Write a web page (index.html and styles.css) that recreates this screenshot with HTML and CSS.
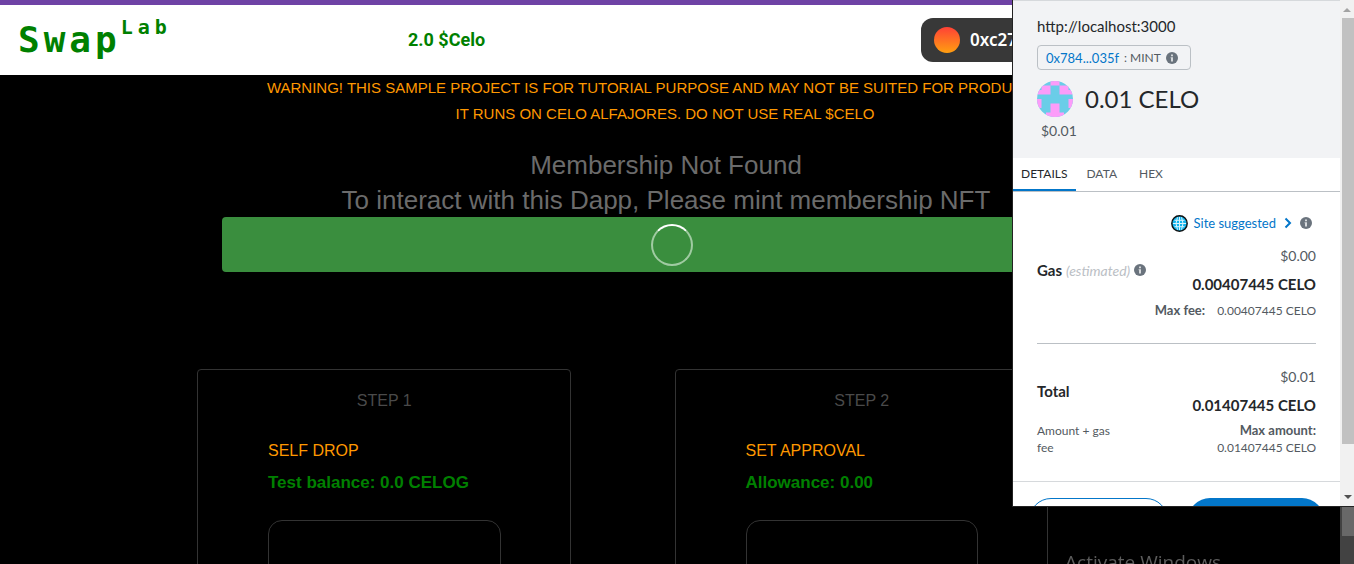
FILE: index.html
```html
<!DOCTYPE html>
<html lang="en">
<head>
<meta charset="utf-8">
<meta name="viewport" content="width=device-width, initial-scale=1">
<title>SwapLab</title>
<link rel="stylesheet" href="styles.css">
</head>
<body>
<svg class="defs" aria-hidden="true">
  <symbol id="info" viewBox="0 0 12 12">
    <circle cx="6" cy="6" r="6" fill="#6a737d"/>
    <path d="M5 2.5h2v1.7H5zM4.6 5.2H7v4.3H5V6.2h-.4z" fill="#d6d9dc"/>
  </symbol>
</svg>
<div class="app">
  <header class="topbar">
    <a class="logo" href="#">Swap<sup class="logo-sup">Lab</sup></a>
    <span class="balance">2.0 $Celo</span>
    <button class="account" type="button"><span class="account-dot"></span>0xc27...a41</button>
  </header>
  <main class="content">
    <section class="warning">
      <p>WARNING! THIS SAMPLE PROJECT IS FOR TUTORIAL PURPOSE AND MAY NOT BE SUITED FOR PRODUCTION.</p>
      <p>IT RUNS ON CELO ALFAJORES. DO NOT USE REAL $CELO</p>
    </section>
    <section class="membership">
      <h1>Membership Not Found</h1>
      <h2>To interact with this Dapp, Please mint membership NFT</h2>
    </section>
    <button class="mint" type="button" aria-label="Minting membership"><span class="spinner"></span></button>
    <section class="steps">
      <article class="card">
        <h3 class="step">STEP 1</h3>
        <p class="action">SELF DROP</p>
        <p class="value">Test balance: 0.0 CELOG</p>
        <div class="panel"></div>
      </article>
      <article class="card">
        <h3 class="step">STEP 2</h3>
        <p class="action">SET APPROVAL</p>
        <p class="value">Allowance: 0.00</p>
        <div class="panel"></div>
      </article>
    </section>
  </main>
</div>
<div class="page-scroll"><div class="page-thumb"></div></div>
<p class="watermark">Activate Windows</p>

<aside class="wallet">
  <div class="wallet-body">
    <section class="summary">
      <p class="origin">http://localhost:3000</p>
      <div class="method"><a href="#">0x784...035f</a><span>: MINT</span><svg class="info"><use href="#info"/></svg></div>
      <div class="amount">
        <svg class="identicon" viewBox="0 0 36 36">
          <clipPath id="round"><circle cx="18" cy="18" r="18"/></clipPath>
          <g clip-path="url(#round)">
            <path fill="#6acde8" d="M0 0h36v36H0z"/>
            <path fill="#fc9cf9" d="M13.500 0h9v4.500H31.500V9H36v4.500H22.500v-9h-9v9H0V9h4.500V4.500h9zM0 18h4.500v9H0zM31.500 18H36v9h-4.500zM13.500 22.500h9v9H27V36H9v-4.500h4.500z"/>
          </g>
        </svg>
        <span>0.01 CELO</span>
      </div>
      <p class="fiat">$0.01</p>
    </section>
    <nav class="tabs">
      <button class="tab tab-active" type="button">DETAILS</button>
      <button class="tab" type="button">DATA</button>
      <button class="tab" type="button">HEX</button>
    </nav>
    <section class="details">
      <div class="suggested">
        <svg class="globe" viewBox="0 0 17 17">
          <circle cx="8.500" cy="8.500" r="7.700" fill="#12b5ee" stroke="#111" stroke-width="1.400"/>
          <path d="M8.500 2v13M2 8.500h13M3.500 5.300h10M3.500 11.700h10M6.500 2.300q-3 6.200 0 12.400M10.500 2.300q3 6.200 0 12.400" fill="none" stroke="#d9f4fd"/>
        </svg>
        <a href="#">Site suggested</a>
        <svg class="chevron" viewBox="0 0 8 12"><path d="M1.500 1.500L6 6l-4.500 4.500" fill="none" stroke="#0376c9" stroke-width="2"/></svg>
        <svg class="info"><use href="#info"/></svg>
      </div>
      <div class="row gas">
        <p class="label"><b>Gas</b> <i>(estimated)</i> <svg class="info"><use href="#info"/></svg></p>
        <div class="figures">
          <p class="usd">$0.00</p>
          <p class="celo">0.00407445 CELO</p>
          <p class="note"><b>Max fee:</b><span>0.00407445 CELO</span></p>
        </div>
      </div>
      <div class="row total">
        <div class="label"><b>Total</b><p class="sub">Amount + gas fee</p></div>
        <div class="figures">
          <p class="usd">$0.01</p>
          <p class="celo">0.01407445 CELO</p>
          <p class="max"><b>Max amount:</b><br>0.01407445 CELO</p>
        </div>
      </div>
    </section>
    <footer class="actions">
      <button class="reject" type="button" aria-label="Reject"></button>
      <button class="confirm" type="button" aria-label="Confirm"></button>
    </footer>
  </div>
  <div class="scroll">
    <svg class="arrow" viewBox="0 0 14 18"><path d="M3 12h8L7 8z" fill="#a3a3a3"/></svg>
    <div class="thumb"></div>
    <svg class="arrow" viewBox="0 0 14 18"><path d="M4 7h8l-4 4z" fill="#505050"/></svg>
  </div>
</aside>
</body>
</html>
```
FILE: styles.css
```css
* { box-sizing: border-box; }
html, body { height: 100%; }
body { margin: 0; overflow: hidden; background: #000; font-family: "Liberation Sans", Arial, sans-serif; }
h1, h2, h3, p { margin: 0; font-weight: 400; }
a { text-decoration: none; }
button { font: inherit; padding: 0; border: 0; cursor: pointer; }
.defs { position: absolute; width: 0; height: 0; }

.app { height: 100%; overflow: hidden; padding-right: 10px; }
.topbar { display: flex; align-items: center; height: 75px; padding: 0 20px 0 18px; background: #fff; border-top: 5px solid #6f42a5; color: #008000; }
.logo { width: 390px; color: #008000; font: bold 36px/44px "DejaVu Sans Mono", monospace; letter-spacing: 4px; }
.logo-sup { font-size: 20px; line-height: 0; vertical-align: 18px; letter-spacing: 5px; }
.balance { font: bold 18px/24px Roboto, sans-serif; }
.account { display: flex; align-items: center; gap: 10px; width: 180px; height: 44px; margin-left: auto; margin-right: 223px; padding-left: 13px; border-radius: 12px; background: #383838; color: #fff; font: 600 17px/24px "Noto Sans", sans-serif; }
.account-dot { width: 26px; height: 26px; border-radius: 50%; background: linear-gradient(#ff4136, #ff9f10); }

.warning { padding-right: 14px; color: #ff9800; font-size: 15px; line-height: 26px; text-align: center; }
.membership { margin-top: 21px; padding-right: 12px; color: #6b6b6b; text-align: center; }
.membership h1, .membership h2 { font-size: 26px; line-height: 35px; }
.mint { display: flex; align-items: center; justify-content: center; width: 67%; height: 55px; margin: -1px auto 0; border-radius: 4px; background: #3a8e3e; }
.spinner { width: 42px; height: 42px; border: 2px solid #a0cba2; border-top-color: #fff; border-radius: 50%; }
.steps { display: flex; gap: 104px; margin: 97px 296px 0 197px; }
.card { flex: 1; height: 420px; padding: 17px 69px 0 70px; border: 1px solid #333; border-radius: 4px; }
.step { color: #4a4a4a; font-size: 16px; line-height: 28px; text-align: center; }
.action { margin-top: 22px; color: #ff9800; font-size: 16px; line-height: 28px; }
.value { margin-top: 4px; color: #008000; font-weight: bold; font-size: 17px; line-height: 28px; white-space: nowrap; }
.panel { height: 200px; margin-top: 23px; border: 1px solid #333; border-radius: 14px; }

.page-scroll { position: fixed; top: 75px; right: 0; bottom: 0; width: 14px; padding-left: 2px; background: #424242; }
.page-thumb { height: 461px; background: #686868; }
.watermark { position: fixed; right: 133px; bottom: -12px; color: #5c5c5c; font: 19px/28px "Open Sans", sans-serif; }

.wallet { position: fixed; top: 0; right: 0; display: flex; width: 342px; height: 507px; overflow: hidden; background: #fff; border: solid #222; border-width: 0 0 1px 1px; color: #24272a; font-family: Lato, sans-serif; }
.wallet-body { flex: 1; height: 100%; overflow: hidden; }
.summary { height: 158px; padding: 15px 24px 0; border-top: 1px solid #d6d9dc; background: #f2f3f5; }
.origin { font-size: 15px; line-height: 20px; }
.method { display: flex; align-items: center; gap: 5px; width: fit-content; height: 25px; margin-top: 9px; padding: 0 12px 0 8px; border: 1px solid #bbc0c5; border-radius: 4px; font-size: 12px; color: #535a61; }
.method a, .suggested a { color: #0376c9; font-size: 13px; }
.info { width: 12px; height: 12px; }
.amount { display: flex; align-items: center; gap: 12px; margin-top: 11px; font-size: 24px; line-height: 36px; }
.identicon { width: 36px; height: 36px; }
.fiat { padding: 4px 0 0 4px; color: #535a61; font-size: 14px; line-height: 20px; }
.tabs { display: flex; height: 34px; border-bottom: 1px solid #bbc0c5; }
.tab { padding: 0 12px 2px 10px; background: none; color: #535a61; font-size: 12px; }
.tab-active { padding: 0 9px 0 8px; border-bottom: 2px solid #0376c9; color: #24272a; }
.details { padding: 20px 24px 0; }
.suggested { display: flex; align-items: center; justify-content: flex-end; height: 22px; padding-right: 4px; }
.globe { width: 17px; height: 17px; margin-right: 6px; }
.chevron { width: 8px; height: 12px; margin: 0 8px; }
.row { display: flex; justify-content: space-between; font-size: 15px; line-height: 20px; }
.label { white-space: nowrap; }
.label i { color: #bbc0c5; font-size: 14px; }
.figures { text-align: right; }
.gas { height: 110px; padding-top: 12px; border-bottom: 1px solid #bbc0c5; }
.gas .label { padding-top: 14px; }
.usd { color: #535a61; font-size: 14px; }
.celo { margin-top: 8px; font-weight: bold; }
.note { margin-top: 6px; color: #535a61; font-size: 12px; }
.note b, .max b { font-size: 13px; }
.note span { margin-left: 12px; }
.total { height: 137px; padding-top: 23px; }
.total .label { padding-top: 14px; }
.sub, .max { color: #535a61; font-size: 12px; line-height: 17px; }
.sub { width: 86px; margin-top: 21px; white-space: normal; }
.max { margin-top: 7px; }
.actions { display: flex; gap: 20px; padding: 16px 16px; border-top: 1px solid #d6d9dc; }
.actions button { flex: 1; height: 44px; border-radius: 22px; }
.reject { border: 1px solid #0376c9; background: #fff; }
.confirm { background: #0376c9; }
.scroll { display: flex; flex-direction: column; width: 14px; background: #f1f1f1; }
.arrow { width: 14px; height: 18px; }
.thumb { flex: 0 0 426px; margin: 0 0 auto 2px; background: #c1c1c1; }
```
